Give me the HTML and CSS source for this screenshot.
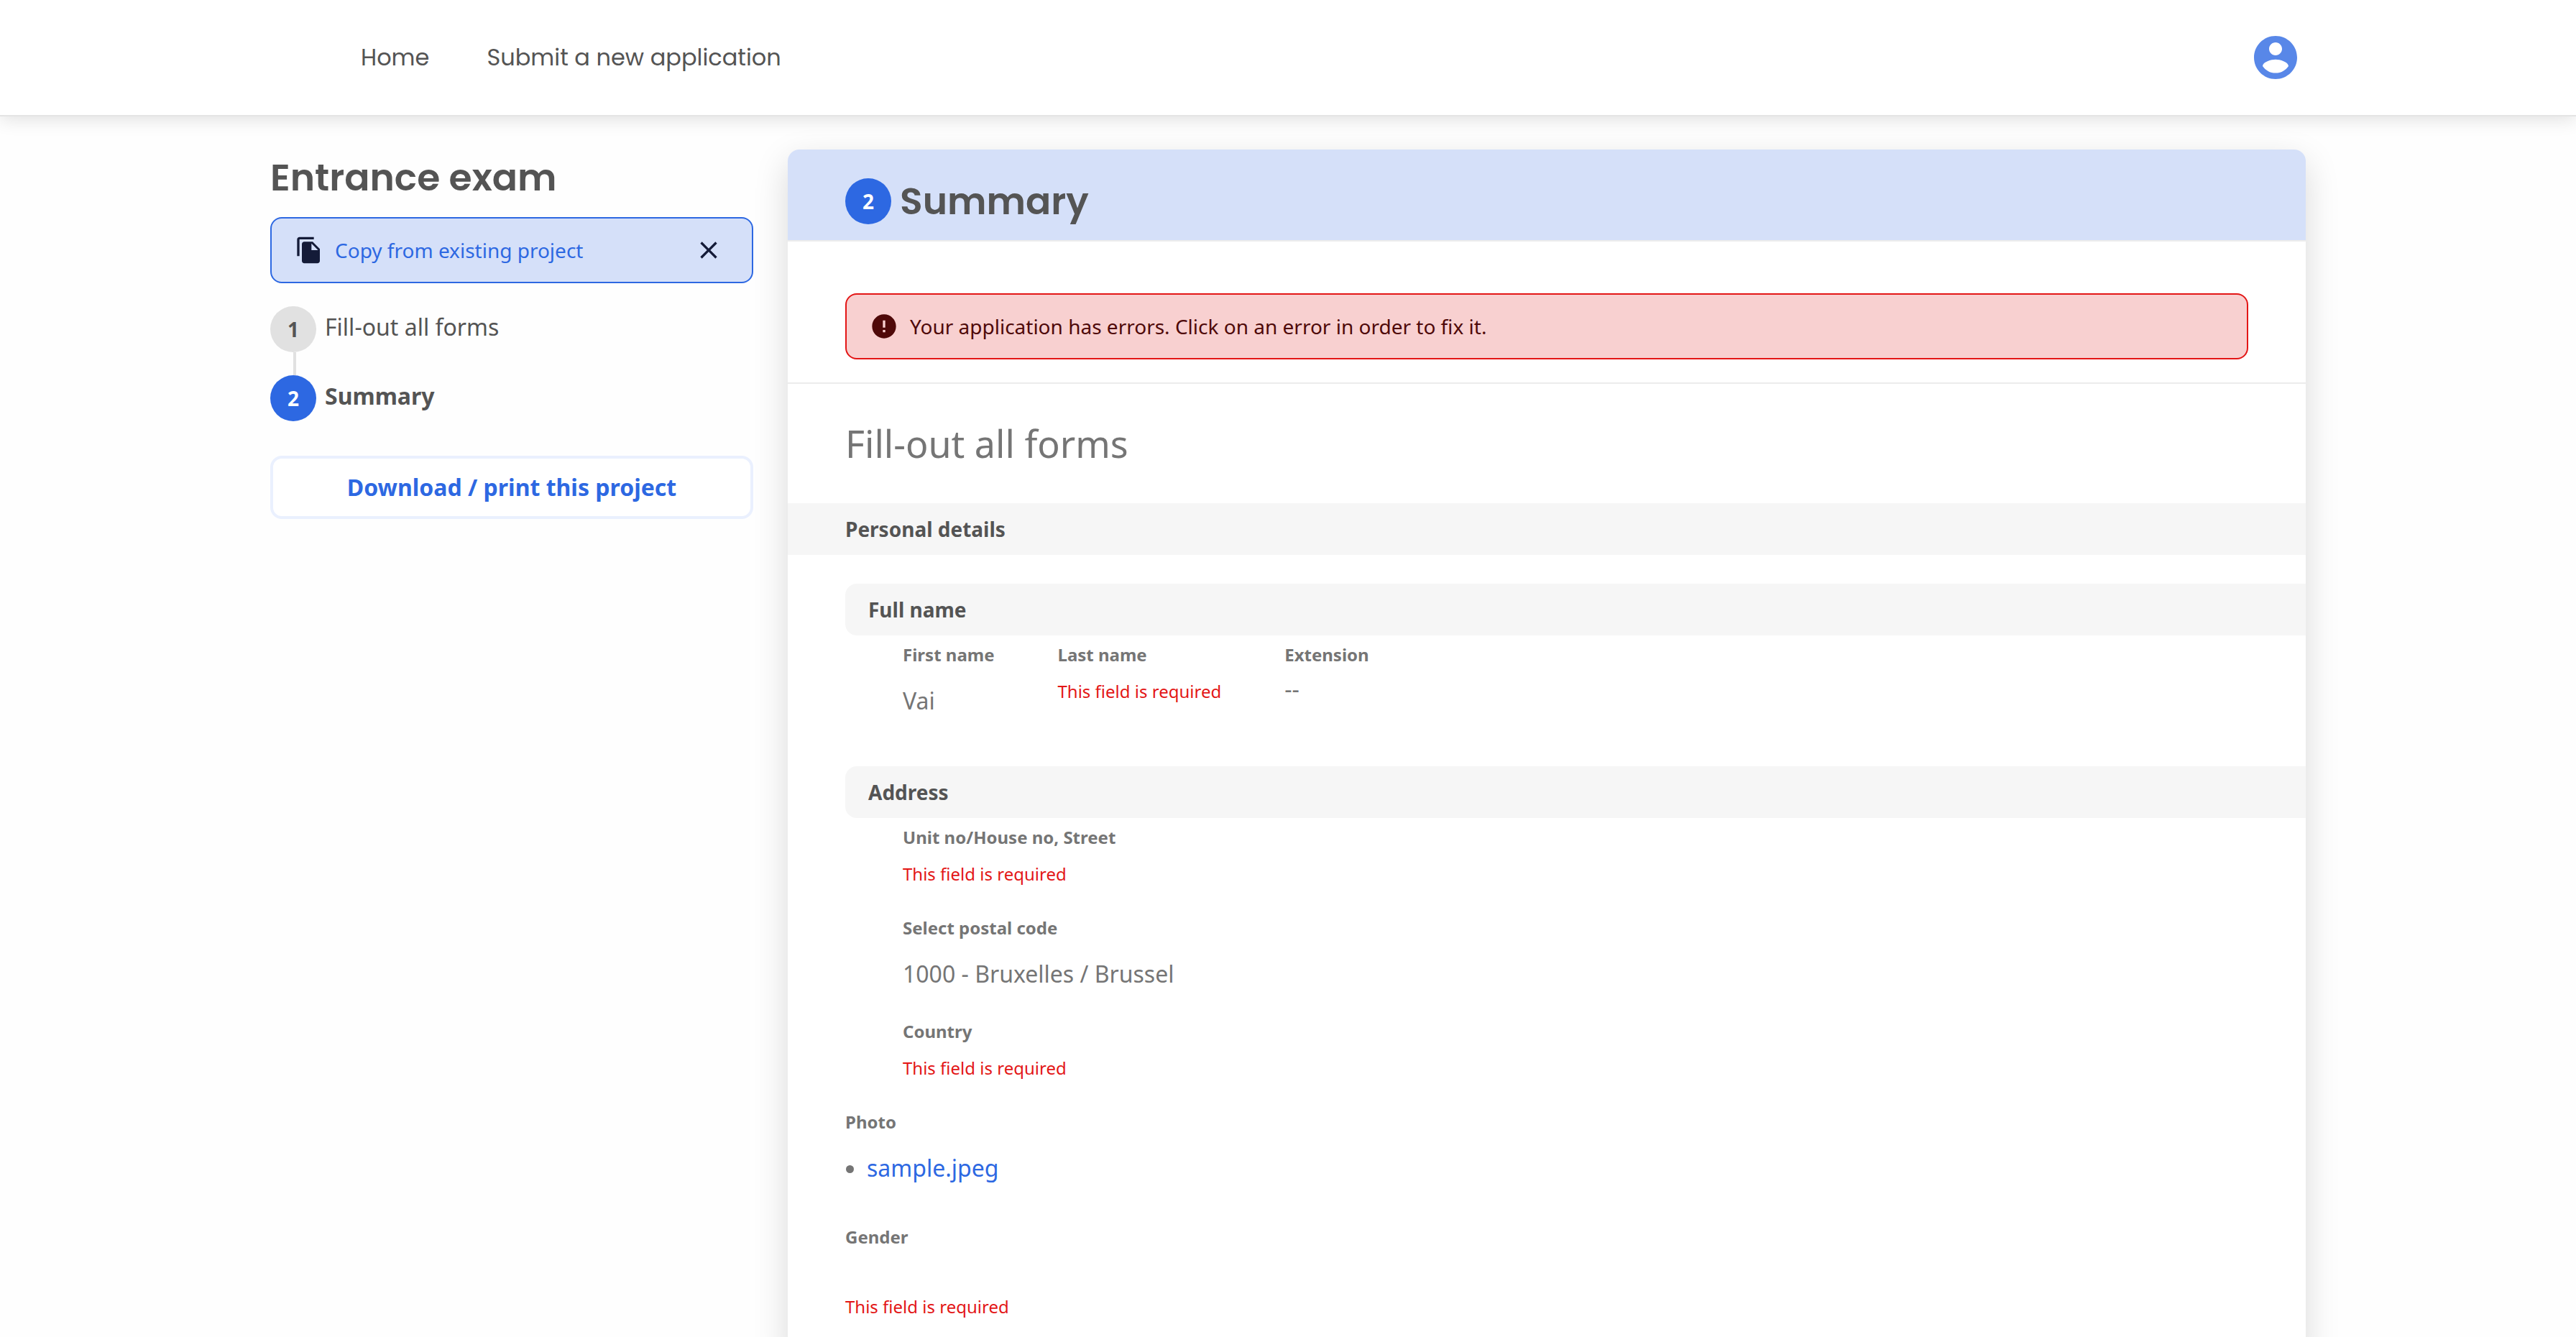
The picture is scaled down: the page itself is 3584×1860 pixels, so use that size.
FILE: index.html
```html
<!DOCTYPE html>
<html lang="en">
<head>
<meta charset="utf-8">
<meta name="viewport" content="width=device-width, initial-scale=1">
<title>Entrance exam – Summary</title>
<link rel="stylesheet" href="styles.css">
</head>
<body>
<header class="topbar">
  <div class="topbar-inner">
    <nav class="nav">
      <a href="#home">Home</a>
      <a href="#new">Submit a new application</a>
    </nav>
    <button class="account" type="button" aria-label="Account">
      <svg class="account-icon" viewBox="0 0 24 24" fill="currentColor"><path d="M12 2C6.48 2 2 6.48 2 12s4.48 10 10 10 10-4.48 10-10S17.52 2 12 2zm0 3c1.66 0 3 1.34 3 3s-1.34 3-3 3-3-1.34-3-3 1.34-3 3-3zm0 14.200c-2.500 0-4.710-1.280-6-3.220.03-1.990 4-3.080 6-3.080 1.990 0 5.970 1.090 6 3.080-1.290 1.940-3.500 3.220-6 3.220z"/></svg>
    </button>
  </div>
</header>

<div class="layout">
  <aside class="sidebar">
    <h1 class="project-title">Entrance exam</h1>
    <div class="alert alert-info">
      <svg class="icon" viewBox="0 0 24 24" fill="currentColor"><path d="M16 1H4c-1.1 0-2 .9-2 2v14h2V3h12V1zm-1 4l6 6v10c0 1.100-.9 2-2 2H7.990C6.890 23 6 22.100 6 21l.01-14c0-1.100.89-2 1.990-2h7zm-1 7h5.500L14 6.500V12z"/></svg>
      <a class="alert-text" href="#copy">Copy from existing project</a>
      <button class="close" type="button" aria-label="Close">
        <svg class="icon" viewBox="0 0 24 24" fill="currentColor"><path d="M19 6.410L17.590 5 12 10.590 6.410 5 5 6.410 10.590 12 5 17.590 6.410 19 12 13.410 17.590 19 19 17.590 13.410 12z"/></svg>
      </button>
    </div>
    <ol class="steps">
      <li class="step"><span class="badge">1</span><a class="step-label" href="#forms">Fill-out all forms</a></li>
      <li class="step step-active"><span class="badge badge-active">2</span><a class="step-label" href="#summary">Summary</a></li>
    </ol>
    <button class="download" type="button">Download / print this project</button>
  </aside>

  <main class="panel">
    <div class="panel-head">
      <span class="badge badge-active">2</span>
      <h2 class="panel-title">Summary</h2>
    </div>
    <div class="panel-alert">
      <div class="alert alert-error" role="alert">
        <svg class="icon" viewBox="0 0 24 24" fill="currentColor"><path d="M12 2C6.480 2 2 6.480 2 12s4.480 10 10 10 10-4.480 10-10S17.520 2 12 2zm1 15h-2v-2h2v2zm0-4h-2V7h2v6z"/></svg>
        <span class="alert-text">Your application has errors. Click on an error in order to fix it.</span>
      </div>
    </div>
    <h2 class="form-title">Fill-out all forms</h2>
    <h3 class="band">Personal details</h3>

    <section class="group group-name">
      <h4 class="band band-inner">Full name</h4>
      <dl class="fields fields-row">
        <div class="field"><dt>First name</dt><dd class="value">Vai</dd></div>
        <div class="field"><dt>Last name</dt><dd><a class="error" href="#last-name">This field is required</a></dd></div>
        <div class="field"><dt>Extension</dt><dd class="empty">--</dd></div>
      </dl>
    </section>

    <section class="group">
      <h4 class="band band-inner">Address</h4>
      <dl class="fields">
        <div class="field"><dt>Unit no/House no, Street</dt><dd><a class="error" href="#street">This field is required</a></dd></div>
        <div class="field"><dt>Select postal code</dt><dd class="value">1000 - Bruxelles / Brussel</dd></div>
        <div class="field"><dt>Country</dt><dd><a class="error" href="#country">This field is required</a></dd></div>
      </dl>
    </section>

    <dl class="fields fields-root">
      <div class="field field-photo">
        <dt>Photo</dt>
        <dd class="value"><ul class="files"><li><a href="#sample">sample.jpeg</a></li></ul></dd>
      </div>
      <div class="field field-gender">
        <dt>Gender</dt>
        <dd><a class="error" href="#gender">This field is required</a></dd>
      </div>
    </dl>
  </main>
</div>
</body>
</html>
```

FILE: styles.css
```css
:root {
  --blue: #2d68e2;
  --blue-light: #d5e0f9;
  --text: #545454;
  --muted: #757575;
  --red: #e31616;
  --grey: #f6f6f6;
  --heading: "Poppins", "Inter", sans-serif;
}

* { box-sizing: border-box; }

body {
  margin: 0;
  background: #fefefe;
  color: var(--text);
  font-family: "Noto Sans", sans-serif;
  font-size: 32px;
  line-height: 46px;
}

h1, h2, h3, h4, dl, dd, ol, ul { margin: 0; padding: 0; }
a { color: inherit; text-decoration: none; }
button { border: 0; padding: 0; background: none; color: inherit; font: inherit; cursor: pointer; }
svg { display: block; }

.topbar {
  background: #fff;
  border-bottom: 2px solid #e4e4e4;
  box-shadow: 0 4px 24px rgba(0, 0, 0, .12);
}

.topbar-inner {
  display: flex;
  align-items: center;
  justify-content: space-between;
  max-width: 2832px;
  min-height: 160px;
  margin: 0 auto;
  padding: 0 6px 0 126px;
}

.nav {
  display: flex;
  gap: 80px;
  font-family: var(--heading);
}

.account { color: #5887e8; }
.account-icon { width: 72px; height: 72px; }

.layout {
  display: flex;
  align-items: flex-start;
  gap: 48px;
  max-width: 2832px;
  margin: 46px auto 0;
}

.sidebar { flex: 0 0 672px; }

.project-title {
  margin-bottom: 16px;
  font: 600 52px/78px var(--heading);
}

.alert {
  display: flex;
  align-items: center;
  gap: 16px;
  padding: 24px 32px;
  border: 2px solid;
  border-radius: 16px;
  font-size: 28px;
  line-height: 40px;
}

.icon { width: 40px; height: 40px; flex: none; }
.alert-text { flex: 1; }

.alert-info { border-color: var(--blue); background: var(--blue-light); color: #141b38; }
.alert-info .alert-text { color: var(--blue); }
.close { margin-right: 8px; }
.alert-error { border-color: var(--red); background: #f8d0d0; color: #4f0909; }

.steps {
  display: flex;
  flex-direction: column;
  gap: 32px;
  margin: 32px 0 48px;
  list-style: none;
}

.step { position: relative; display: flex; gap: 12px; }
.step-label { padding-top: 6px; }
.step-active { font-weight: 700; }

/* line that joins a step to the one above it */
.step + .step::before {
  content: "";
  position: absolute;
  left: 32px;
  bottom: 100%;
  width: 4px;
  height: 32px;
  background: #e1e1e1;
}

.badge {
  display: flex;
  align-items: center;
  justify-content: center;
  width: 64px;
  height: 64px;
  border-radius: 50%;
  background: #e1e1e1;
  font-size: 28px;
  font-weight: 700;
}

.badge-active { background: var(--blue); color: #fff; }

.download {
  width: 100%;
  padding: 17px 32px;
  border: 4px solid #eaf0fe;
  border-radius: 16px;
  background: #fff;
  color: var(--blue);
  font-weight: 700;
}

.panel {
  flex: 1;
  min-width: 0;
  padding-bottom: 48px;
  border-radius: 16px 16px 0 0;
  background: #fff;
  box-shadow: 0 16px 48px rgba(0, 0, 0, .15);
}

.panel-head {
  display: flex;
  align-items: center;
  gap: 12px;
  padding: 32px 80px 14px;
  border-bottom: 2px solid #ececec;
  border-radius: 16px 16px 0 0;
  background: var(--blue-light);
  background-clip: padding-box;
}

.panel-title { font: 600 52px/80px var(--heading); }
.panel-alert { padding: 72px 80px 32px; border-bottom: 2px solid #ececec; }

.form-title {
  padding: 48px 80px;
  color: var(--muted);
  font-size: 52px;
  font-weight: 400;
  line-height: 70px;
}

.band {
  padding: 16px 80px;
  background: var(--grey);
  font-size: 28px;
  line-height: 40px;
}

.band-inner { padding: 16px 32px; border-radius: 16px 0 0 16px; }
.group { margin: 38px 0 38px 80px; }
.group-name { margin: 40px 0 68px 80px; }

.fields {
  display: flex;
  flex-direction: column;
  gap: 38px;
  padding: 8px 80px 0;
  color: var(--muted);
}

.fields-row { flex-direction: row; gap: 88px; }
.fields-root { padding-top: 0; }
.field { display: flex; flex-direction: column; gap: 14px; }

dt { font-size: 24px; font-weight: 700; line-height: 38px; }
.value { margin-top: 8px; }
.empty { margin-top: -8px; }
.error { display: block; color: var(--red); font-size: 24px; line-height: 36px; }

.field-photo { padding-bottom: 16px; }
.field-gender { gap: 60px; }
.files { padding-left: 30px; }
.files a { color: var(--blue); }
```
